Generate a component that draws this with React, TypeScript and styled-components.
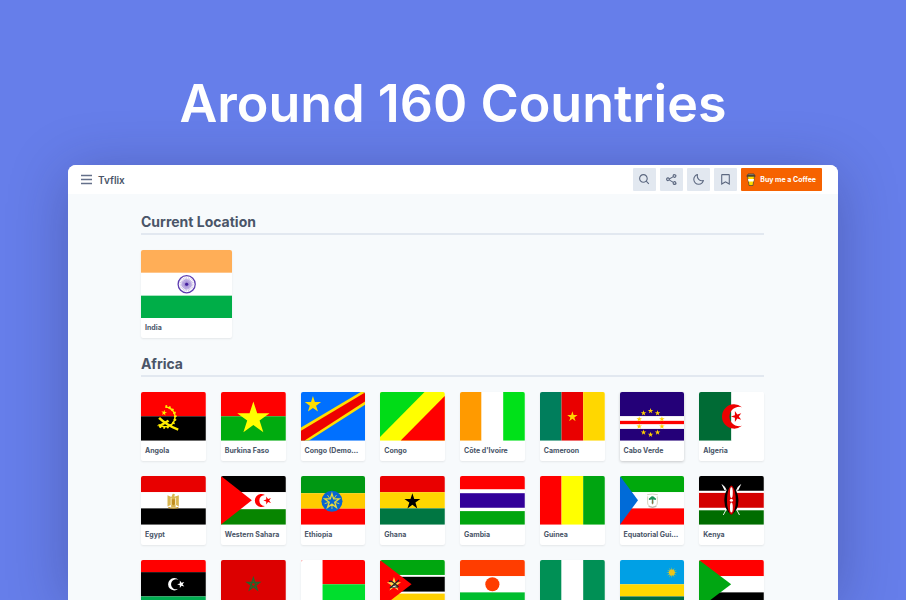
import React from "react";
import styled, { createGlobalStyle } from "styled-components";
import { BiSearch, BiShareAlt, BiMoon, BiBookmark } from "react-icons/bi";

const GlobalStyle = createGlobalStyle`
  *, *::before, *::after { box-sizing: border-box; }
  body {
    margin: 0;
    background: #667eea;
    color: #4a5568;
    font-family: Inter, "Liberation Sans", sans-serif;
  }
`;

const Page = styled.main`
  display: flex;
  flex-direction: column;
  height: 100vh;
  overflow: hidden;
  padding: 0 68px;
`;

const Headline = styled.h1`
  margin: 0;
  padding: 72px 0 29px;
  color: #fff;
  font-size: 52px;
  line-height: 64px;
  font-weight: 600;
  text-align: center;
  white-space: nowrap;
`;

const Window = styled.section`
  flex: 1;
  min-height: 0;
  overflow: hidden;
  border-radius: 8px 8px 0 0;
  background: #f7fafc;
  box-shadow: 0 8px 60px rgba(30, 30, 70, 0.3);
`;

const Header = styled.header`
  display: flex;
  align-items: center;
  justify-content: space-between;
  height: 29px;
  padding: 0 16px 0 12px;
  background: #fff;
`;

const Brand = styled.div`
  display: flex;
  align-items: center;
  gap: 5px;
  font-size: 10px;
  line-height: 16px;
  font-weight: 600;
`;

const MenuButton = styled.button`
  display: flex;
  padding: 0;
  border: 0;
  background: none;
  color: #64708a;
`;

const Actions = styled.nav`
  display: flex;
  gap: 4px;
`;

const IconButton = styled.button`
  display: flex;
  align-items: center;
  justify-content: center;
  width: 23px;
  height: 23px;
  padding: 0;
  border: 0;
  border-radius: 1px;
  background: #e2e8f0;
  color: #5c6880;
`;

const CoffeeLink = styled.a`
  display: flex;
  align-items: center;
  gap: 4px;
  height: 23px;
  padding: 0 6px 0 5px;
  border-radius: 1px;
  background: #f66200;
  color: #fff;
  font-size: 7px;
  font-weight: 700;
  text-decoration: none;
  white-space: nowrap;
`;

const Content = styled.div`
  padding: 18px 74px 0 73px;
`;

const Region = styled.section`
  margin-bottom: 16px;
`;

const RegionTitle = styled.h2`
  margin: 0 0 15px;
  padding-bottom: 1px;
  border-bottom: 2px solid #e2e8f0;
  font-size: 14px;
  line-height: 20px;
  font-weight: 700;
`;

const Grid = styled.div<{ $columns: number }>`
  display: grid;
  grid-template-columns: repeat(${(p) => p.$columns}, minmax(0, 1fr));
  gap: 15px;
`;

const Card = styled.a<{ $raised?: boolean }>`
  display: block;
  overflow: hidden;
  border-radius: 2px;
  background: #fff;
  color: inherit;
  text-decoration: none;
  box-shadow: ${(p) =>
    p.$raised ? "0 1px 3px rgba(0, 0, 0, 0.2)" : "0 1px 2px rgba(0, 0, 0, 0.08)"};
`;

const FlagImage = styled.svg`
  display: block;
  width: 100%;
  aspect-ratio: 4 / 3;
`;

const CardLabel = styled.div`
  padding: 0 4px;
  overflow: hidden;
  font-size: 7px;
  line-height: 20px;
  font-weight: 700;
  text-overflow: ellipsis;
  white-space: nowrap;
`;

function starPoints(cx: number, cy: number, r: number, turn = 0) {
  return Array.from({ length: 10 }, (_, i) => {
    const angle = ((i * 36 - 90 + turn) * Math.PI) / 180;
    const radius = i % 2 ? r * 0.382 : r;
    return `${(cx + radius * Math.cos(angle)).toFixed(1)},${(cy + radius * Math.sin(angle)).toFixed(1)}`;
  }).join(" ");
}

interface StarProps {
  x: number;
  y: number;
  r: number;
  fill: string;
  turn?: number;
}

const Star = ({ x, y, r, fill, turn }: StarProps) => (
  <polygon points={starPoints(x, y, r, turn)} fill={fill} />
);

/** Bands stacked top to bottom, each given as [colour, height]. */
const Rows = ({ bands }: { bands: [string, number][] }) => {
  let y = 0;
  return (
    <>
      {bands.map(([fill, h], i) => {
        const top = y;
        y += h;
        return <rect key={i} y={top} width="640" height={h} fill={fill} />;
      })}
    </>
  );
};

/** Bands side by side, each given as [colour, width]. */
const Columns = ({ bands }: { bands: [string, number][] }) => {
  let x = 0;
  return (
    <>
      {bands.map(([fill, w], i) => {
        const left = x;
        x += w;
        return <rect key={i} x={left} width={w} height="480" fill={fill} />;
      })}
    </>
  );
};

const ring = (n: number) => Array.from({ length: n }, (_, i) => (i * 360) / n);

const indiaFlag = (
  <>
    <Rows bands={[["#ffae57", 160], ["#fff", 160], ["#00ae48", 160]]} />
    <g transform="translate(320 240)" stroke="#5c3bb0">
      <circle r="60" fill="#fff" strokeWidth="9" />
      <circle r="36" fill="#d9cdf2" stroke="none" />
      {ring(24).map((a) => (
        <path key={a} d="M0 0V-50" strokeWidth="3" opacity=".6" transform={`rotate(${a})`} />
      ))}
      <circle r="11" fill="#44209c" stroke="none" />
    </g>
  </>
);

const africa: { name: string; raised?: boolean; flag: React.ReactNode }[] = [
  {
    name: "Angola",
    flag: (
      <>
        <Rows bands={[["red", 240], ["#000", 240]]} />
        <path d="M242 148A98 98 0 1 1 176 322" fill="none" stroke="#ffec00" strokeWidth="15" />
        <path d="M242 143A104 104 0 1 1 168 326" fill="none" stroke="#ffec00" strokeWidth="27" strokeDasharray="16 19" />
        <path d="M188 246q60 62 184 116l-8 22q-120-50-194-120z" fill="#ffec00" />
        <path d="M280 292l-98 58-12-18 94-58z" fill="#ffec00" />
        <Star x={228} y={205} r={30} fill="#ffec00" turn={10} />
      </>
    ),
  },
  {
    name: "Burkina Faso",
    flag: (
      <>
        <Rows bands={[["red", 240], ["#00ab0f", 240]]} />
        <Star x={320} y={263} r={168} fill="#ff0" />
      </>
    ),
  },
  {
    name: "Congo (Democratic)",
    flag: (
      <>
        <rect width="640" height="480" fill="#0070ff" />
        <path d="M0 350L590 0H640V122L80 480H0z" fill="#ffdf00" />
        <path d="M0 382L640 0V90L36 480H0z" fill="#ed0000" />
        <Star x={118} y={125} r={85} fill="#ffdf00" />
      </>
    ),
  },
  {
    name: "Congo",
    flag: (
      <>
        <rect width="640" height="480" fill="#ff0" />
        <path d="M0 0H440L0 445z" fill="#00dc17" />
        <path d="M640 40V480H205z" fill="red" />
      </>
    ),
  },
  {
    name: "Côte d'Ivoire",
    flag: <Columns bands={[["#ff9a00", 213], ["#fff", 214], ["#00e119", 213]]} />,
  },
  {
    name: "Cameroon",
    flag: (
      <>
        <Columns bands={[["#007e5c", 213], ["#e90000", 214], ["#ffd700", 213]]} />
        <Star x={320} y={245} r={54} fill="#ffd700" />
      </>
    ),
  },
  {
    name: "Cabo Verde",
    raised: true,
    flag: (
      <>
        <Rows bands={[["#240078", 240], ["#fff", 45], ["#f00", 35], ["#fff", 45], ["#240078", 115]]} />
        {ring(10).map((a) => (
          <Star
            key={a}
            x={302 + 118 * Math.sin((a * Math.PI) / 180)}
            y={304 - 118 * Math.cos((a * Math.PI) / 180)}
            r={29}
            fill="#ffd000"
          />
        ))}
      </>
    ),
  },
  {
    name: "Algeria",
    flag: (
      <>
        <Columns bands={[["#006b35", 320], ["#fff", 320]]} />
        <path d="M424 150A120 120 0 1 0 424 334A96 96 0 1 1 424 150z" fill="#ed0000" />
        <Star x={372} y={242} r={56} fill="#ed0000" turn={-18} />
      </>
    ),
  },
  {
    name: "Egypt",
    flag: (
      <>
        <Rows bands={[["#e80000", 160], ["#fff", 160], ["#000", 160]]} />
        <path d="M262 190l38 18 14-33 20 4-4 25 44-14v112l-32-18v28h-44v-28l-36 18z" fill="#d9b650" />
        <path d="M298 215v70M342 215v70" stroke="#fff8dc" strokeWidth="8" />
        <path d="M305 230h30v48l-15 12-15-12z" fill="#c08e20" />
        <path d="M270 305q50 20 100 0v14q-50 8-100 0z" fill="#c99c28" />
      </>
    ),
  },
  {
    name: "Western Sahara",
    flag: (
      <>
        <Rows bands={[["#000", 160], ["#fff", 168], ["#078500", 152]]} />
        <path d="M0 0L305 240L0 480z" fill="red" />
        <path d="M434 187A65 65 0 1 0 434 297A55 55 0 1 1 434 187z" fill="red" />
        <Star x={460} y={242} r={42} fill="red" turn={-18} />
      </>
    ),
  },
  {
    name: "Ethiopia",
    flag: (
      <>
        <Rows bands={[["#009813", 170], ["#ffcb00", 153], ["red", 157]]} />
        <circle cx="306" cy="250" r="104" fill="#0865d1" />
        <polygon points={starPoints(306, 250, 75)} fill="none" stroke="#e8db3b" strokeWidth="13" />
        {ring(5).map((a) => (
          <path key={a} d="M306 217V174" stroke="#e8db3b" strokeWidth="8" transform={`rotate(${a + 36} 306 250)`} />
        ))}
      </>
    ),
  },
  {
    name: "Ghana",
    flag: (
      <>
        <Rows bands={[["#e90000", 160], ["#ffd600", 160], ["#007642", 160]]} />
        <Star x={320} y={253} r={83} fill="#000" />
      </>
    ),
  },
  {
    name: "Gambia",
    flag: (
      <Rows bands={[["red", 133], ["#fff", 37], ["#320099", 145], ["#fff", 32], ["#00a50e", 133]]} />
    ),
  },
  {
    name: "Guinea",
    flag: <Columns bands={[["red", 213], ["#ff0", 214], ["#00a511", 213]]} />,
  },
  {
    name: "Equatorial Guinea",
    flag: (
      <>
        <Rows bands={[["#00a90c", 160], ["#fff", 160], ["red", 160]]} />
        <path d="M0 0L178 240L0 480z" fill="#006bd8" />
        <path d="M268 185q50-14 106 0M273 202v65q4 35 48 42 45-7 48-42v-65" fill="none" stroke="#c6c0a6" strokeWidth="7" />
        <path d="M286 237q-7-20 13-25 20-22 43 0 20 5 13 26l-26-6 2 40h-18l2-40z" fill="#1c9358" />
        <path d="M317 235h8v45h-8z" fill="#a36a3e" />
        <path d="M282 302q39 15 78 0" fill="none" stroke="#8b8b8b" strokeWidth="6" />
      </>
    ),
  },
  {
    name: "Kenya",
    flag: (
      <>
        <Rows bands={[["#000", 147], ["#fff", 20], ["#d40000", 148], ["#fff", 24], ["#006d00", 141]]} />
        <path d="M240 385L390 105M400 385L250 105" stroke="#fff" strokeWidth="9" />
        <path d="M222 78q31 13 45 67l-16-7zM418 78q-31 13-45 67l16-7z" fill="#fff" />
        <path d="M320 95Q388 140 390 240T320 382Q252 340 250 240T320 95z" fill="#000" />
        <path d="M320 95C378 130 378 350 320 382C262 350 262 130 320 95z" fill="#d40000" />
        <ellipse cx="320" cy="165" rx="14" ry="53" fill="#fff" />
        <ellipse cx="320" cy="312" rx="14" ry="50" fill="#fff" />
        <circle cx="320" cy="240" r="15" fill="#fff" />
      </>
    ),
  },
  {
    name: "Libya",
    flag: (
      <>
        <Rows bands={[["red", 120], ["#000", 240], ["#00ac50", 120]]} />
        <path d="M371 196A61 61 0 1 0 371 284A50 50 0 1 1 371 196z" fill="#fff" />
        <Star x={396} y={240} r={39} fill="#fff" turn={-18} />
      </>
    ),
  },
  {
    name: "Morocco",
    flag: (
      <>
        <rect width="640" height="480" fill="#dc0000" />
        <path d="M320 179L357 292L261 222H379L283 292z" fill="none" stroke="#27642b" strokeWidth="14" />
      </>
    ),
  },
  {
    name: "Madagascar",
    flag: (
      <>
        <Rows bands={[["red", 240], ["#00de2d", 240]]} />
        <rect width="213" height="480" fill="#fff" />
      </>
    ),
  },
  {
    name: "Mozambique",
    flag: (
      <>
        <Rows bands={[["#00a60f", 148], ["#fff", 18], ["#000", 148], ["#fff", 18], ["#ffd000", 148]]} />
        <path d="M0 0L312 240L0 480z" fill="red" />
        <Star x={138} y={242} r={74} fill="#ffd54a" />
        <path d="M98 270h78l-39-22z" fill="#fff" stroke="#333" strokeWidth="8" />
        <path d="M88 212l24-4 72 56M100 276l88-78" fill="none" stroke="#222" strokeWidth="12" />
      </>
    ),
  },
  {
    name: "Niger",
    flag: (
      <>
        <Rows bands={[["#ff3d00", 160], ["#fff", 160], ["#00bd2e", 160]]} />
        <circle cx="320" cy="240" r="70" fill="#ff3d00" />
      </>
    ),
  },
  {
    name: "Nigeria",
    flag: <Columns bands={[["#009055", 213], ["#fff", 214], ["#009055", 213]]} />,
  },
  {
    name: "Rwanda",
    flag: (
      <>
        <Rows bands={[["#00a0e5", 240], ["#ffd700", 120], ["#006b42", 120]]} />
        {ring(12).map((a) => (
          <path key={a} d="M512 68l7 50h-14z" fill="#d0c734" transform={`rotate(${a} 512 124)`} />
        ))}
        <circle cx="512" cy="124" r="29" fill="#edc51a" />
      </>
    ),
  },
  {
    name: "Sudan",
    flag: (
      <>
        <Rows bands={[["red", 160], ["#fff", 160], ["#000", 160]]} />
        <path d="M0 0L318 240L0 480z" fill="#00a612" />
      </>
    ),
  },
];

interface CountryProps {
  name: string;
  raised?: boolean;
  flag: React.ReactNode;
}

const Country = ({ name, raised, flag }: CountryProps) => (
  <Card href="#" $raised={raised}>
    <FlagImage viewBox="0 0 640 480" preserveAspectRatio="xMidYMid slice" aria-hidden="true">
      {flag}
    </FlagImage>
    <CardLabel>{name}</CardLabel>
  </Card>
);

const CoffeeCup = () => (
  <svg width="10" height="13" viewBox="0 0 20 26" aria-hidden="true">
    <path d="M3 6h14l-3 19H6z" fill="#ffdd00" stroke="#4d4637" strokeWidth="1.5" />
    <path d="M4 12h12l-1 5H5z" fill="#fff" />
    <path d="M4 2h12l1 3H3z" fill="#9d947e" stroke="#3f3b30" strokeWidth="1.5" />
    <path d="M1 6h18" stroke="#3f3b30" strokeWidth="2" />
  </svg>
);

export default function App() {
  return (
    <>
      <GlobalStyle />
      <Page>
        <Headline>Around 160 Countries</Headline>
        <Window>
          <Header>
            <Brand>
              <MenuButton aria-label="Menu">
                <svg width="13" height="11" viewBox="0 0 13 11" aria-hidden="true">
                  <path d="M1 1.500h11M1 5.500h11M1 9.500h11" stroke="currentColor" strokeWidth="1.400" />
                </svg>
              </MenuButton>
              Tvflix
            </Brand>
            <Actions>
              <IconButton aria-label="Search"><BiSearch size={13} /></IconButton>
              <IconButton aria-label="Share"><BiShareAlt size={13} /></IconButton>
              <IconButton aria-label="Dark mode"><BiMoon size={13} /></IconButton>
              <IconButton aria-label="Bookmarks"><BiBookmark size={13} /></IconButton>
              <CoffeeLink href="#"><CoffeeCup />Buy me a Coffee</CoffeeLink>
            </Actions>
          </Header>
          <Content>
            <Region>
              <RegionTitle>Current Location</RegionTitle>
              <Grid $columns={6}>
                <Country name="India" flag={indiaFlag} />
              </Grid>
            </Region>
            <Region>
              <RegionTitle>Africa</RegionTitle>
              <Grid $columns={8}>
                {africa.map((c) => (
                  <Country key={c.name} {...c} />
                ))}
              </Grid>
            </Region>
          </Content>
        </Window>
      </Page>
    </>
  );
}
